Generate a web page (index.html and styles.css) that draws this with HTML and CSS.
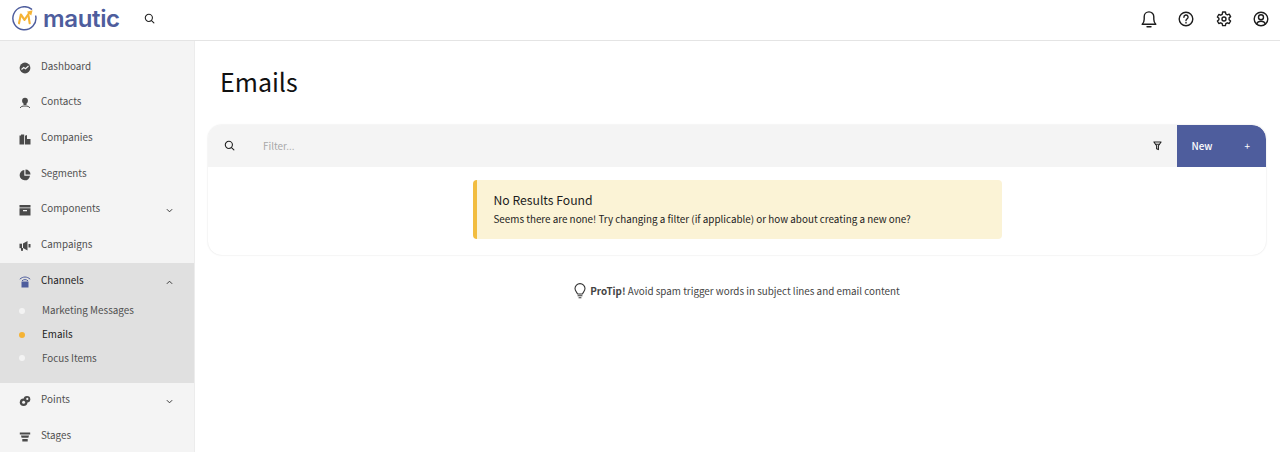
FILE: index.html
```html
<!DOCTYPE html>
<html lang="en">
<head>
<meta charset="utf-8">
<title>Emails</title>
<link rel="stylesheet" href="styles.css">
</head>
<body>
<header class="topbar">
  <div class="brand">
    <svg class="logo-mark" viewBox="0 0 26 26" width="25" height="25" fill="none">
      <path d="M20.300 3.300A12 12 0 1 0 24.700 10.500" stroke="#4e5d9d" stroke-width="1.500" stroke-linecap="round"/>
      <path d="M7.300 18 9.200 8.800 13 14.400 17.800 7.500" stroke="#f5b335" stroke-width="2.200" stroke-linejoin="round" stroke-linecap="round"/>
      <path d="M17.200 10.200 18.400 18" stroke="#f5b335" stroke-width="2.200" stroke-linecap="round"/>
      <path d="M15.400 6 21.400 4.400 20 9.800Z" fill="#f5b335"/>
    </svg>
    <span class="logo-text">mautic</span>
    <svg class="ico search-top" viewBox="0 0 12 12" width="11" height="11"><circle cx="5.300" cy="5.300" r="3.900"/><path d="M8.200 8.200 10.800 10.800"/></svg>
  </div>
  <div class="top-actions">
    <svg viewBox="0 0 16 18" width="16" height="18" class="top-ico"><path d="M1.200 14.200h13.600c-1.500-1.300-2-2.800-2-5V6.700a4.800 4.800 0 0 0-9.600 0v2.500c0 2.200-.5 3.700-2 5Z"/><path d="M6 16.800h4"/></svg>
    <svg viewBox="0 0 16 16" width="16" height="16" class="top-ico"><circle cx="8" cy="8" r="6.800"/><path d="M5.900 6.200A2.100 2.100 0 1 1 8.900 8C8.300 8.400 8 8.700 8 9.500"/><path d="M8 11.400v.6"/></svg>
    <svg viewBox="0 0 16 16" width="16" height="16" class="top-ico"><path d="M6.600 1h2.800l.4 2 1.500.8 1.900-.7 1.400 2.500-1.500 1.300v1.800l1.500 1.300-1.400 2.500-1.900-.7-1.500.8-.4 2H6.600l-.4-2-1.500-.8-1.900.7-1.400-2.500 1.500-1.300V7.300L1.400 6l1.400-2.500 1.900.7 1.500-.8Z"/><circle cx="8" cy="8" r="2"/></svg>
    <svg viewBox="0 0 16 16" width="16" height="16" class="top-ico"><circle cx="8" cy="8" r="6.800"/><circle cx="8" cy="6.300" r="2.500"/><path d="M3.600 13c.8-2 2.400-2.800 4.400-2.800s3.600.8 4.400 2.800"/></svg>
  </div>
</header>
<div class="shell">
  <nav class="sidebar">
    <a class="nav-item">
      <svg class="nav-ico" viewBox="0 0 12 12"><circle cx="6" cy="6" r="5.400"/><path class="cut" d="M2.500 7.500 4.700 5.500 6.500 6.700 9.500 4"/></svg>
      <span class="nav-label">Dashboard</span>
    </a>
    <a class="nav-item">
      <svg class="nav-ico" viewBox="0 0 12 12"><circle cx="6" cy="3.700" r="2.900"/><rect x="4.500" y="5" width="3" height="3"/><path class="thin" d="M1.300 11c.4-1.500 1.700-2 4.700-2s4.300.5 4.700 2"/></svg>
      <span class="nav-label">Contacts</span>
    </a>
    <a class="nav-item">
      <svg class="nav-ico" viewBox="0 0 12 12"><path d="M.500 11.500V2.500h1.500v-1h3.200V11.500Z"/><path d="M6 11.500V2.800L8 2V6h3.500V11.500Z"/></svg>
      <span class="nav-label">Companies</span>
    </a>
    <a class="nav-item">
      <svg class="nav-ico" viewBox="0 0 12 12"><path d="M5.300 1A5.200 5.200 0 1 0 11 6.800H5.300Z"/><path d="M6.500 .5a5 5 0 0 1 5 5H6.500Z"/></svg>
      <span class="nav-label">Segments</span>
    </a>
    <a class="nav-item">
      <svg class="nav-ico" viewBox="0 0 12 12"><path d="M.500 1h11v2.500H.500Z"/><path fill-rule="evenodd" d="M.500 4.300h11V11.500H.500ZM4 6v1.200h4V6Z"/></svg>
      <span class="nav-label">Components</span>
      <svg class="chev" viewBox="0 0 8 5" width="7" height="5"><path d="M1 1 4 4 7 1"/></svg>
    </a>
    <a class="nav-item">
      <svg class="nav-ico" viewBox="0 0 12 12"><path d="M4 3.500 8.500 1V10.500L4 8Z"/><rect x=".500" y="3.700" width="2.500" height="4.500"/><rect x="9.500" y="4" width="2" height="3.500"/><rect x="2" y="8" width="2" height="2.800"/></svg>
      <span class="nav-label">Campaigns</span>
    </a>
    <div class="nav-group">
      <a class="nav-item nav-item-open">
        <svg class="nav-ico blue" viewBox="0 0 12 12"><rect x="2.500" y="5.500" width="7" height="6"/><path class="wave" d="M.800 3.200C4 .300 8 .300 11.200 3.200M3 4.800C5 3.200 7 3.200 9 4.800"/></svg>
        <span class="nav-label">Channels</span>
        <svg class="chev" viewBox="0 0 8 5" width="7" height="5"><path d="M1 4 4 1 7 4"/></svg>
      </a>
      <a class="sub-item"><span class="dot"></span><span class="sub-label">Marketing Messages</span></a>
      <a class="sub-item sub-active"><span class="dot"></span><span class="sub-label">Emails</span></a>
      <a class="sub-item"><span class="dot"></span><span class="sub-label">Focus Items</span></a>
    </div>
    <a class="nav-item">
      <svg class="nav-ico" viewBox="0 0 12 12"><circle cx="4.600" cy="7.200" r="3.800"/><circle cx="8" cy="4.200" r="3.300"/><circle class="hole" cx="4.600" cy="7.200" r="1.500"/><circle class="hole" cx="8.300" cy="3.900" r="1.100"/></svg>
      <span class="nav-label">Points</span>
      <svg class="chev" viewBox="0 0 8 5" width="7" height="5"><path d="M1 1 4 4 7 1"/></svg>
    </a>
    <a class="nav-item">
      <svg class="nav-ico" viewBox="0 0 12 12"><path d="M.800 1.500h10.400v2H.800Z"/><path d="M2 4.600h8l-.6 2.200H2.600Z"/><path d="M3.300 8h5.400v2.500H3.300Z"/></svg>
      <span class="nav-label">Stages</span>
    </a>
  </nav>
  <main class="content">
    <h1 class="page-title">Emails</h1>
    <section class="panel">
      <div class="toolbar">
        <svg class="ico filter-search" viewBox="0 0 12 12" width="11" height="11"><circle cx="5.300" cy="5.300" r="3.900"/><path d="M8.200 8.200 10.800 10.800"/></svg>
        <span class="filter-text">Filter...</span>
        <svg class="ico funnel" viewBox="0 0 10 11" width="9" height="10"><path d="M1 1h8L6 5.200V9.500L4 8.500V5.200Z"/><path d="M3 3.500h4"/></svg>
        <button class="new-btn"><span>New</span><span class="plus">+</span></button>
      </div>
      <div class="panel-body">
        <div class="alert">
          <div class="alert-title">No Results Found</div>
          <div class="alert-text">Seems there are none! Try changing a filter (if applicable) or how about creating a new one?</div>
        </div>
      </div>
    </section>
    <p class="protip">
      <svg class="bulb" viewBox="0 0 12 16" width="12" height="16"><path d="M3.500 11C3.200 9.300 1 8.300 1 5.600a5 5 0 0 1 10 0C11 8.300 8.800 9.300 8.500 11Z"/><path d="M4 12.800h4M5 14.700h2"/></svg>
      <span><strong>ProTip!</strong> Avoid spam trigger words in subject lines and email content</span>
    </p>
  </main>
</div>
</body>
</html>
```
FILE: styles.css
```css
* { box-sizing: border-box; }
html, body { margin: 0; height: 100%; overflow: hidden; }
body {
  display: flex;
  flex-direction: column;
  background: #fff;
  color: #222;
  font-family: "Noto Sans CJK SC", "Noto Sans", sans-serif;
  font-size: 9.850px;
}
.topbar {
  flex: 0 0 41px;
  display: flex;
  align-items: center;
  justify-content: space-between;
  border-bottom: 1px solid #e4e4e4;
  padding: 0 11px 3px 12px;
}
.brand { display: flex; align-items: center; }
.logo-mark { display: block; }
.logo-text {
  margin-left: 6px;
  font-family: "Inter", sans-serif;
  font-size: 24px;
  line-height: 26px;
  font-weight: 600;
  letter-spacing: -.35px;
  color: #4e5d9d;
  width: 76px;
}
.ico { fill: none; stroke: #222; stroke-width: 1.200; stroke-linecap: round; stroke-linejoin: round; flex: none; }
.search-top { margin-left: 25px; }
.top-actions { display: flex; align-items: center; gap: 21.500px; }
.top-ico { fill: none; stroke: #1d1d1d; stroke-width: 1.400; stroke-linecap: round; stroke-linejoin: round; display: block; }
.shell { flex: 1; display: flex; min-height: 0; }
.sidebar {
  flex: 0 0 195px;
  background: #f4f4f4;
  border-right: 1px solid #ececec;
  padding-top: 8px;
  overflow: hidden;
}
.nav-item {
  display: flex;
  align-items: center;
  height: 35.600px;
  padding: 0 20.500px 0 19px;
  color: #505050;
}
.nav-ico { width: 12px; height: 12px; fill: #4a4a4a; flex: none; margin-top: 2px; }
.nav-ico .cut { fill: none; stroke: #f4f4f4; stroke-width: 1.100; }
.nav-ico .thin { fill: none; stroke: #4a4a4a; stroke-width: 1; }
.nav-ico .hole { fill: #f4f4f4; }
.nav-ico.blue { fill: #4e5d9d; }
.nav-ico .wave { fill: none; stroke: #4e5d9d; stroke-width: 1; }
.nav-label { margin-left: 10px; flex: 1; margin-top: -2px; }
.chev { fill: none; stroke: #333; stroke-width: 1.100; flex: none; margin-right: 1px; margin-top: 2px; }
.nav-group { background: #e0e0e0; height: 120px; padding-top: 1px; }
.nav-item-open { color: #222; }
.nav-group .nav-item { height: 35px; }
.sub-item {
  display: flex;
  align-items: center;
  height: 23.700px;
  padding: 1px 0 0 19px;
  color: #505050;
}
.dot { width: 6px; height: 6px; border-radius: 50%; background: #f3f3f3; flex: none; }
.sub-label { margin-left: 17px; margin-top: -1px; }
.sub-active { color: #222; }
.sub-active .dot { background: #f5b335; }
.content { flex: 1; padding: 0 14px 0 13px; min-width: 0; }
.page-title {
  margin: 0;
  padding: 20px 0 0 12px;
  height: 84px;
  font-size: 25px;
  line-height: 40px;
  font-weight: 400;
  color: #111;
}
.panel {
  border-radius: 14px;
  box-shadow: 0 0 2px rgba(0, 0, 0, .14);
  background: #fff;
  height: 130px;
  overflow: hidden;
}
.toolbar {
  display: flex;
  align-items: center;
  height: 41.500px;
  background: #f4f4f4;
  padding-left: 15.500px;
}
.filter-text { margin-left: 28.500px; flex: 1; color: #a8a8a8; }
.funnel { margin-right: 15.500px; }
.new-btn {
  align-self: stretch;
  width: 89px;
  border: 0;
  padding: 0 16px 0 14.500px;
  background: #4e5d9d;
  color: #fff;
  font: 500 9.850px "Noto Sans CJK SC", "Noto Sans", sans-serif;
  display: flex;
  align-items: center;
  justify-content: space-between;
  border-top-right-radius: 14px;
}
.plus { font-weight: 400; }
.panel-body { display: flex; justify-content: center; padding-top: 13.500px; }
.alert {
  width: 529px;
  height: 59px;
  background: #fbf3d6;
  border-left: 4px solid #f2bd40;
  border-radius: 4px;
  padding: 10px 17px;
}
.alert-title { font-size: 12.200px; line-height: 20px; color: #1c1c1c; }
.alert-text { line-height: 18px; color: #222; }
.protip {
  margin: 28px 0 0;
  display: flex;
  justify-content: center;
  align-items: center;
  gap: 4px;
  color: #444;
}
.protip strong { font-weight: 700; }
.bulb { fill: none; stroke: #333; stroke-width: 1.100; stroke-linecap: round; stroke-linejoin: round; }
```
